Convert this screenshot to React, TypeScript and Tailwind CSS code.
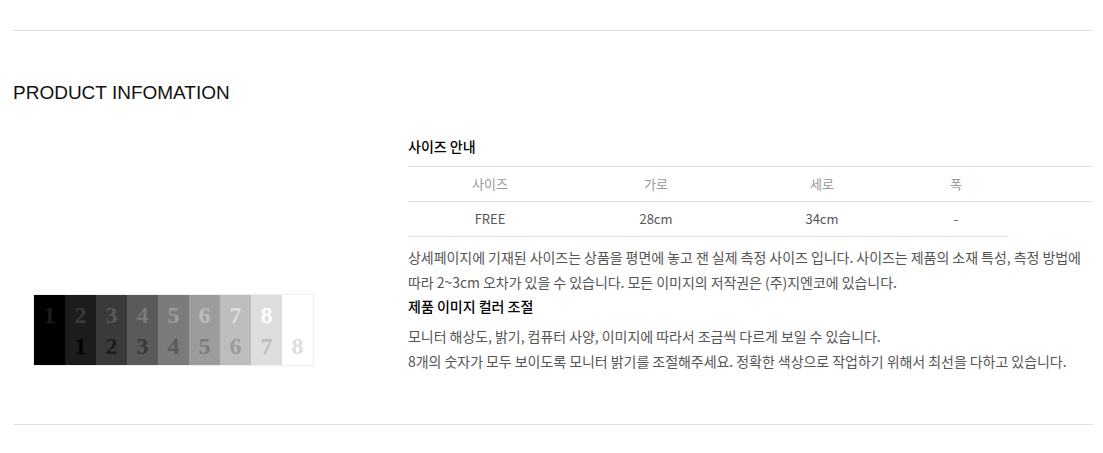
import React from 'react'

// 모니터 컬러 체크용 그레이 스케일 (9칸)
const grays = ['#000000', '#1c1c1c', '#3a3a3a', '#5a5a5a', '#7b7b7b', '#9c9c9c', '#bdbdbd', '#dedede', '#ffffff']

const cols = [
  { head: '사이즈', value: 'FREE' },
  { head: '가로', value: '28cm' },
  { head: '세로', value: '34cm' },
  { head: '폭', value: '-' },
]

function GrayChart() {
  return (
    <div className="flex h-[72px] w-fit border border-[#eeeeee]">
      {grays.map((bg, i) => (
        <div
          key={i}
          className="flex w-[31px] flex-col items-center text-[24px] font-bold leading-[31px]"
          style={{ background: bg, fontFamily: '"Liberation Serif", "DejaVu Serif", serif' }}
        >
          <span className="mt-[5px] h-[31px]" style={{ color: grays[i + 1] ?? 'transparent' }}>
            {i < 8 ? i + 1 : ''}
          </span>
          <span className="h-[31px]" style={{ color: i > 0 ? grays[i - 1] : 'transparent' }}>
            {i > 0 ? i : ''}
          </span>
        </div>
      ))}
    </div>
  )
}

export default function App() {
  return (
    <div
      className="bg-white pt-[30px] pl-[13px] pr-[10px]"
      style={{ fontFamily: '"Noto Sans CJK KR", "Noto Sans", sans-serif' }}
    >
      <div className="border-t border-[#e1e1e1]" />

      <h2
        className="mt-[51px] text-[19px] leading-[22px] text-[#111111]"
        style={{ fontFamily: '"Liberation Sans", Arial, sans-serif' }}
      >
        PRODUCT INFOMATION
      </h2>

      <div className="mt-[32px] flex">
        <div className="w-[395px] shrink-0 pt-[158px] pl-[20px]">
          <GrayChart />
        </div>

        <div className="flex-1">
          <h3 className="text-[14px] font-medium leading-[20px] text-black">사이즈 안내</h3>

          <div className="mt-[10px] border-y border-[#e1e1e1]">
            <div className="grid h-[34px] grid-cols-[164px_168px_164px_104px] items-center text-center text-[13px] text-[#999999]">
              {cols.map(c => (
                <div key={c.head}>{c.head}</div>
              ))}
            </div>
          </div>
          <div className="w-[600px] border-b border-[#e1e1e1]">
            <div className="grid h-[34px] grid-cols-[164px_168px_164px_104px] items-center text-center text-[13px] text-[#555555]">
              {cols.map(c => (
                <div key={c.head}>{c.value}</div>
              ))}
            </div>
          </div>

          <p className="mt-[8px] whitespace-nowrap text-[14px] leading-[25px] tracking-[-0.05px] text-[#555555]">
            상세페이지에 기재된 사이즈는 상품을 평면에 놓고 잰 실제 측정 사이즈 입니다. 사이즈는 제품의 소재 특성, 측정 방법에
            <br />
            따라 2~3cm 오차가 있을 수 있습니다. 모든 이미지의 저작권은 (주)지엔코에 있습니다.
          </p>

          <h3 className="text-[14px] font-medium leading-[22px] text-black">제품 이미지 컬러 조절</h3>

          <p className="mt-[7px] whitespace-nowrap text-[14px] leading-[25px] tracking-[-0.05px] text-[#555555]">
            모니터 해상도, 밝기, 컴퓨터 사양, 이미지에 따라서 조금씩 다르게 보일 수 있습니다.
            <br />
            8개의 숫자가 모두 보이도록 모니터 밝기를 조절해주세요. 정확한 색상으로 작업하기 위해서 최선을 다하고 있습니다.
          </p>
        </div>
      </div>

      <div className="mt-[50px] border-t border-[#e1e1e1]" />
      <div className="h-[28px]" />
    </div>
  )
}
